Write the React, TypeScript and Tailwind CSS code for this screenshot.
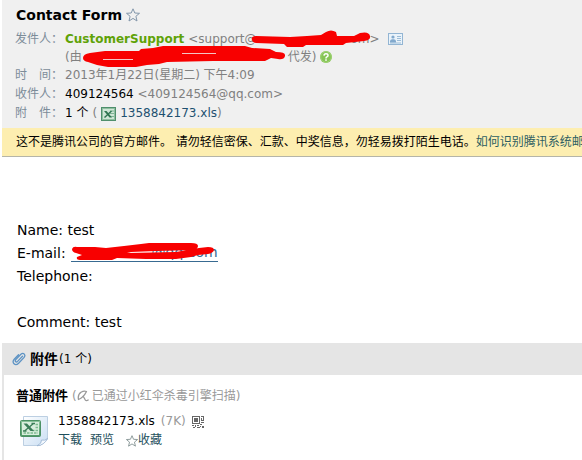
import type { ReactNode } from "react";

const font = "font-['DejaVu_Sans','Noto_Sans_CJK_SC',sans-serif]";

function Star({ className }: { className: string }) {
  return (
    <svg viewBox="0 0 14 14" className={className} fill="none" stroke="currentColor">
      <path d="M7 0.8 8.8 5 13.5 5.3 9.9 8.3 11 13 7 10.4 3 13 4.1 8.3 0.5 5.3 5.2 5Z" />
    </svg>
  );
}

function CardIcon() {
  return (
    <svg viewBox="0 0 15 12" className="h-3 w-[15px]">
      <rect x="0.5" y="0.5" width="14" height="11" fill="#eaf3fa" stroke="#93b5d3" />
      <circle cx="5" cy="4" r="1.6" fill="#82a9cd" />
      <path d="M2 9.5V8Q2.5 6.5 4.2 6.3H5.8Q7.5 6.5 8 8V9.5Z" fill="#82a9cd" />
      <path d="M9 3.5H13M9 5.5H13M9 7.5H13M2 10H13" stroke="#93b5d3" strokeWidth="0.9" />
    </svg>
  );
}

function HelpIcon() {
  return (
    <svg viewBox="0 0 12 12" className="size-3">
      <circle cx="6" cy="6" r="6" fill="#86c455" />
      <circle cx="6" cy="6" r="5.3" fill="none" stroke="#a5d67c" strokeWidth="0.8" />
      <path d="M4 4.6Q4.1 2.8 6 2.8 8 2.8 8 4.4 8 5.4 6.9 5.9 6 6.3 6 7.4" fill="none" stroke="#fff" strokeWidth="1.5" />
      <rect x="5.2" y="8.3" width="1.6" height="1.5" fill="#fff" />
    </svg>
  );
}

function XlsIcon() {
  return (
    <svg viewBox="0 0 15 14" className="h-[14px] w-[15px]">
      <rect x="0.5" y="0.5" width="14" height="13" fill="#8fbfa0" stroke="#4f8f6c" />
      <rect x="2" y="2" width="11" height="10" fill="#cfe6d6" />
      <path d="M9 4H13M9 6.5H13M9 9.5H13" stroke="#7fb295" />
      <path d="M3 4H5.5L11 10.5H8.5Z" fill="#2f7550" />
      <path d="M10.5 4 3.5 10.5" stroke="#2f7550" strokeWidth="1.4" />
    </svg>
  );
}

function XlsFileIcon() {
  return (
    <svg viewBox="0 0 28 31" className="h-[31px] w-7">
      <defs>
        <linearGradient id="sheet" x1="0" y1="0" x2="1" y2="1">
          <stop offset="0" stopColor="#fff" />
          <stop offset="1" stopColor="#c9def3" />
        </linearGradient>
        <linearGradient id="badge" x1="0" y1="0" x2="0" y2="1">
          <stop offset="0" stopColor="#8cc59c" />
          <stop offset="1" stopColor="#4f9a68" />
        </linearGradient>
      </defs>
      <path d="M3.5 0.5H27.5V23Q24 27 20 29.5H3.5Z" fill="url(#sheet)" stroke="#bccfe2" />
      <path d="M27.5 22.5Q25 25 21.5 24 22 27.5 17 29.8 24 29.5 27.5 22.5Z" fill="#f4f9fe" stroke="#98b2d0" strokeWidth="0.8" />
      <rect x="0.5" y="4.5" width="20" height="16" rx="1" fill="url(#badge)" stroke="#4b9165" />
      <rect x="2" y="6" width="17" height="13" fill="#d8eedd" />
      <path d="M12 14.5H18M3.5 17H18M15.5 8.5H18M15.5 11.5H18" stroke="#7dba91" strokeWidth="1.4" strokeDasharray="2.5 1" />
      <path d="M3.5 7.5H7L14 15H10.5Z" fill="#3a7d58" />
      <path d="M13.5 7.5 4.5 15M11.5 7.5H15M3 15H6.5" fill="none" stroke="#3a7d58" strokeWidth="1.3" />
    </svg>
  );
}

function ClipIcon() {
  return (
    <svg viewBox="0 0 14 14" className="h-[14px] w-[14px]" fill="none" strokeLinecap="round">
      <path
        d="M10.5 4.2 5.6 9.4Q4.4 10.4 3.6 9.6 2.8 8.7 3.8 7.6L8.9 2.3Q10.7 0.7 12.2 2.1 13.6 3.6 12.1 5.4L6.6 11.2Q4.1 13.7 2 11.8 0.1 9.6 2.2 7.2L6.5 2.8"
        stroke="#5d93c4"
        strokeWidth="1.3"
      />
    </svg>
  );
}

function UmbrellaIcon() {
  return (
    <svg viewBox="0 0 12 12" className="size-3" fill="none" stroke="#999" strokeWidth="1.3" strokeLinecap="round" strokeLinejoin="round">
      <path d="M1.5 9.5Q0.5 4.5 4 2.2 7 0.5 9.5 1.5 6.5 7.5 1.5 9.5Z" />
      <path d="M6.2 6.2 8.2 9.8Q9.3 11.3 11.2 10" />
    </svg>
  );
}

function QrIcon() {
  return (
    <svg viewBox="0 0 12 12" className="size-3" shapeRendering="crispEdges">
      <path d="M0 0H8V8H0ZM1 1V7H7V1Z" fill="#666" fillRule="evenodd" />
      <path
        d="M2 2H6V6H2ZM9 0H12V1H9ZM9 2H10V5H9ZM11 1H12V4H11ZM10 4H12V5H10ZM9 6H12V7H9ZM0 9H2V10H0ZM3 9H4V11H3ZM5 9H7V10H5ZM1 11H3V12H1ZM5 11H8V12H5ZM8 8H10V9H8ZM8 10H9V11H8ZM10 10H12V12H10Z"
        fill="#666"
      />
    </svg>
  );
}

function Row({ label, children }: { label: string; children: ReactNode }) {
  return (
    <div className="flex">
      <dt className="w-[50px] shrink-0 text-[#7c8c99]">{label}</dt>
      <dd className="whitespace-nowrap">{children}</dd>
    </div>
  );
}

export default function App() {
  return (
    <div className={`${font} overflow-hidden bg-white pl-[2px] text-xs text-black`}>
      <header className="bg-[#f0f0f0] px-[13px] pt-[6px] pb-[5px]">
        <div className="flex items-center gap-1 pl-px">
          <h1 className="text-sm leading-[18px] font-bold">Contact Form</h1>
          <button type="button" aria-label="Star">
            <Star className="size-[14px] text-[#8296aa]" />
          </button>
        </div>

        <dl className="pt-[6px] leading-[19px] text-[#808080]">
          <Row label="发件人：">
            <div className="flex leading-[18px]">
              <b className="text-[#5fa207]">CustomerSupport</b>
              <span className="pl-1">&lt;support@</span>
              <span className="relative w-[113px] text-right">
                om
                <svg viewBox="0 0 120 16" className="absolute top-px -right-[3px] h-4 w-[120px] overflow-visible">
                  <path
                    d="M0 9Q-1 5 4 5L38 6 55 5 69 4 74 1Q79-2 84 1L85 5 102 5 108 2Q117 0 118 5 119 9 112 10L94 12 91 14 54 14 51 16 35 16 32 13 4 12Q1 12 0 9Z"
                    fill="#f80000"
                  />
                </svg>
              </span>
              <span>&gt;</span>
              <button type="button" aria-label="Contact card" className="pl-2">
                <CardIcon />
              </button>
            </div>
            <div className="flex leading-[18px]">
              <span>(由</span>
              <span className="relative w-[206px]">
                <svg viewBox="0 0 203 22" className="absolute top-[2px] left-px h-[22px] w-[203px] overflow-visible">
                  <path
                    d="M0 8Q0 4 7 3L22 1 56 1 58-1 70-2 80-4 162-4 169-2 187-1 193 2Q203 2 202 6 201 10 195 9L188 8 182 11 130 11 84 12 76 14 64 15 53 17 25 17 14 15 5 12Q0 11 0 8Z"
                    fill="#f80000"
                  />
                  <path d="M20 9.5H50M99 3.5H133" stroke="#f4c4c4" />
                </svg>
              </span>
              <span>代发)</span>
              <button type="button" aria-label="Help" className="pl-1">
                <HelpIcon />
              </button>
            </div>
          </Row>
          <Row label="时　间：">2013年1月22日(星期二) 下午4:09</Row>
          <Row label="收件人：">
            <span className="text-black">409124564</span> &lt;409124564@qq.com&gt;
          </Row>
          <Row label="附　件：">
            <div className="flex items-center">
              <span className="text-black">1 个</span>
              <span className="px-1">(</span>
              <XlsIcon />
              <a href="#attachments" className="pl-1 text-[#1e5070]">
                1358842173.xls
              </a>
              )
            </div>
          </Row>
        </dl>
      </header>

      <p className="overflow-hidden border-b border-[#b5b5a8] bg-[#fdeeb0] px-[14px] text-xs leading-7 whitespace-nowrap">
        这不是腾讯公司的官方邮件。 请勿轻信密保、汇款、中奖信息，勿轻易拨打陌生电话。
        <a href="#identify" className="text-[#2e5e62]">如何识别腾讯系统邮件</a>
      </p>

      <main className="px-[15px] pt-[62px] pb-[9px] text-sm leading-[23px]">
        <p>Name: test</p>
        <div className="flex gap-[5px]">
          <span>E-mail:</span>
          <a href="#mail" className="relative w-[147px] text-right text-[#386a91]">
            <span className="mt-[2px] block border-b border-[#386a91] leading-[17px]">@qq.com</span>
            <svg viewBox="0 0 147 20" className="absolute top-px left-0 h-5 w-[147px] overflow-visible">
              <path
                d="M1 6Q2 3 6 4L24 4 35 5 53 3 70 1 78 0 120 0Q127 0 127 3 127 6 121 7L85 8 60 9 56 10 105 9 128 5 137 4Q143 4 143 7 142 10 137 11L127 12 120 14 105 16 75 16 46 15 41 17 9 17Q5 17 6 14L11 12 5 10Q1 9 1 6Z"
                fill="#f80000"
              />
            </svg>
          </a>
        </div>
        <p>Telephone:</p>
        <p className="pt-[23px]">Comment: test</p>
      </main>

      <section id="attachments" className="border-l-2 border-[#e5e5e5]">
        <div className="flex h-8 items-center bg-[#e5e5e5] pl-2">
          <ClipIcon />
          <h2 className="pl-1 text-sm font-bold">附件</h2>
          <span className="pl-px">(1 个)</span>
        </div>

        <div className="px-3 pt-[11px] pb-[10px]">
          <div className="flex h-5 items-center whitespace-nowrap text-[#999]">
            <h3 className="pr-1 text-[13px] font-bold text-black">普通附件</h3>
            (<UmbrellaIcon />
            <span className="pl-[3px]">已通过小红伞杀毒引擎扫描)</span>
          </div>
          <div className="flex gap-[10px] pt-[6px] pl-1">
            <div className="pt-1">
              <XlsFileIcon />
            </div>
            <div className="leading-[19px]">
              <div className="flex items-center gap-[6px]">
                <span>1358842173.xls</span>
                <span className="text-[#999]">(7K)</span>
                <QrIcon />
              </div>
              <div className="flex items-center text-[#1e4f5c]">
                <a href="#download">下载</a>
                <a href="#preview" className="pl-2">预览</a>
                <button type="button" className="flex items-center pl-3">
                  <Star className="size-3 text-[#7c8c8c]" />
                  收藏
                </button>
              </div>
            </div>
          </div>
        </div>
      </section>
    </div>
  );
}
